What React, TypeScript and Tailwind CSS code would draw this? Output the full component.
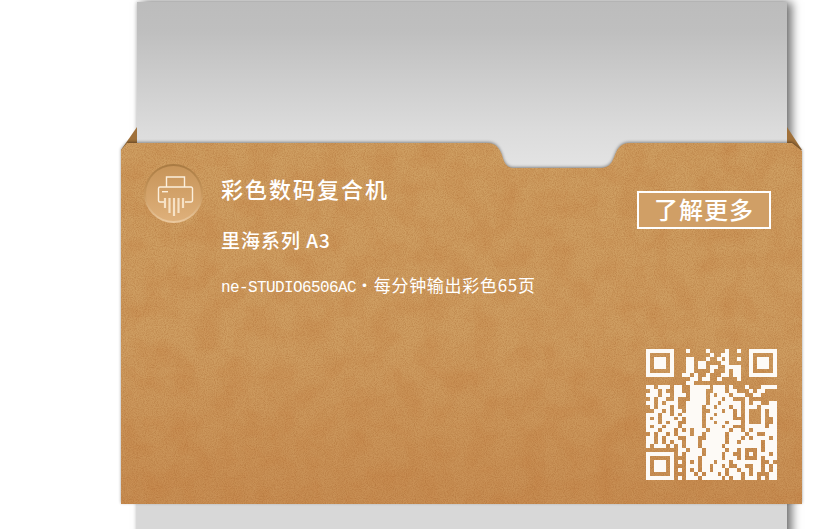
import React from 'react';

const CJK = '"Noto Sans CJK SC", "Noto Sans", sans-serif';

const QR_ROWS = [
  '#######...#....#....#..#..#######',
  '#.....#.........#..##.....#.....#',
  '#.###.#...##...#..#.#..#..#.###.#',
  '#.###.#...##.##....##.....#.###.#',
  '#.###.#...##.##.##..####..#.###.#',
  '#.....#...##....#...#.##..#.....#',
  '#######..##.#..#...##.##..#######',
  '...........##.##..#....#.........',
  '..........##.....................',
  '##.###.##..#####.###.#...#...####',
  '.##.#..##..####..###.##...#.##...',
  '###.##.###.####.#.###.###..##....',
  '.#.##..#...####.###.##...#.......',
  '##.#.###..#####.##.#####.#.##..##',
  '.#.###.#..####.##.###.##.###.####',
  '..##.#.##.####..###.##.#.#...#.##',
  '###.##.#.#####.##.####.#.#...#.##',
  '#.#.###.#.####.#.#####...#...#..#',
  '###.#.##..####.##.##.###.#...#..#',
  '#.##.###.#####.####.##...#####.##',
  '###.###.#.#.###.#####.##.#.######',
  '.#.##.#.###.##.#####.####.##..###',
  '##.#.###..###..#####.###.#.####.#',
  '##.#.#.##.###.######.##.#####.###',
  '#.###.#.#.###.#####.#########.###.',
  '........##.###.#####.##.#...#.###',
  '#######.#.####.####.##..#.#.###.#',
  '#.....#...###.#####.###.#...#.###',
  '#.###.#.#.#.#.###.###.#######..#.',
  '#.###.#...###.##.##.#..##..##.#.#',
  '#.###.#.#.#.#.##.###.##.##.##.#.#',
  '#.....#...##.#.###.#.###.#.#...##',
  '#######.#.###.#####.#.##.###.#.##',
];

function QrCode() {
  return (
    <svg width="131" height="131" viewBox="0 0 33 33" shapeRendering="crispEdges" className="block">
      {QR_ROWS.map((row, y) =>
        row.split('').map((c, x) =>
          c === '#' ? <rect key={`${x}-${y}`} x={x} y={y} width="1.02" height="1.02" fill="#fdfaf6" /> : null,
        ),
      )}
    </svg>
  );
}

function ShredderBadge() {
  return (
    <svg width="60" height="60" viewBox="0 0 60 60" className="block shrink-0">
      <defs>
        <linearGradient id="badge" x1="0" y1="0" x2="0" y2="1">
          <stop offset="0" stopColor="#c79459" />
          <stop offset="1" stopColor="#deb07a" />
        </linearGradient>
        <linearGradient id="rim" x1="0" y1="0" x2="0" y2="1">
          <stop offset="0" stopColor="#a87a42" />
          <stop offset="0.5" stopColor="#c8975c" />
          <stop offset="1" stopColor="#eccaa0" />
        </linearGradient>
      </defs>
      <circle cx="29.500" cy="29.500" r="29.500" fill="url(#rim)" />
      <circle cx="29.500" cy="29.500" r="27.500" fill="url(#badge)" />
      <g fill="none" stroke="#fcefdc" strokeWidth="1.400">
        <path d="M22.500 23v-10h18v10" />
        <path d="M22 38h-6a1.500 1.500 0 0 1-1.500-1.500v-12a1.500 1.500 0 0 1 1.500-1.500h31a1.500 1.500 0 0 1 1.500 1.500v12a1.500 1.500 0 0 1-1.500 1.500h-6" />
      </g>
      <rect x="18" y="27" width="6" height="1.400" fill="#fcefdc" />
      <g stroke="#f7e2c5" strokeWidth="2.200">
        <path d="M21 34v10" />
        <path d="M25.500 34v15" />
        <path d="M30 34v18" />
        <path d="M34.500 34v15" />
        <path d="M39 34v10" />
      </g>
    </svg>
  );
}

function FolderBody() {
  return (
    <svg
      width="681"
      height="361"
      viewBox="0 0 681 361"
      className="absolute left-0 top-0 drop-shadow-[0_-1px_1.500px_rgba(0,0,0,0.4)]"
    >
      <defs>
        <linearGradient id="kraft" x1="0" y1="0" x2="0" y2="1">
          <stop offset="0" stopColor="#cf9f62" />
          <stop offset="0.55" stopColor="#cf9e62" />
          <stop offset="1" stopColor="#c88f54" />
        </linearGradient>
        <filter id="grain" x="0" y="0" width="100%" height="100%" colorInterpolationFilters="sRGB">
          <feTurbulence type="fractalNoise" baseFrequency="0.9" numOctaves="2" seed="4" />
          <feColorMatrix values="0 0 0 0 0.62  0 0 0 0 0.36  0 0 0 0 0.14  0.7 0 0 0 -0.25" />
        </filter>
        <filter id="blotch" x="0" y="0" width="100%" height="100%" colorInterpolationFilters="sRGB">
          <feTurbulence type="fractalNoise" baseFrequency="0.04" numOctaves="4" seed="9" />
          <feColorMatrix values="0 0 0 0 0.75  0 0 0 0 0.46  0 0 0 0 0.22  0.55 0 0 0 -0.2" />
        </filter>
        <clipPath id="folderClip">
          <path d="M0 7L6 0H366C374 0 378 4 381 12C383 20 386 25 392 25H480C488 25 491 20 494 12C497 4 501 0 509 0H671L681 8V361H0Z" />
        </clipPath>
      </defs>
      <g clipPath="url(#folderClip)">
        <rect width="681" height="361" fill="url(#kraft)" />
        <rect width="681" height="361" filter="url(#blotch)" />
        <rect width="681" height="361" filter="url(#grain)" />
      </g>
    </svg>
  );
}

export default function App() {
  return (
    <div className="relative w-[823px] h-[529px] bg-white overflow-hidden" style={{ fontFamily: CJK }}>
      {/* paper sheet sticking out of the folder */}
      <div className="absolute left-[137px] top-[2px] w-[650px] h-[540px] bg-[linear-gradient(to_bottom,#bcbcbc_0px,#bfbfbf_30px,#dcdcdc_130px,#e3e3e3_165px,#d8d8d8_166px,#d8d8d8_100%)] shadow-[5px_0_9px_rgba(0,0,0,0.55),-1px_0_3px_rgba(0,0,0,0.15)]" />

      {/* folder back flaps */}
      <svg width="823" height="160" viewBox="0 0 823 160" className="absolute left-0 top-0">
        <path d="M121 150L137 127V150Z" fill="#a0713a" />
        <path d="M787 127L802 150H787Z" fill="#a0713a" />
      </svg>

      {/* folder */}
      <div className="absolute left-[121px] top-[143px] w-[681px] h-[361px]">
        <FolderBody />
        <div className="relative h-full flex justify-between pl-[23px] pr-[25px] pt-[21px] pb-[24px] text-white">
          <div className="flex gap-[17px]">
            <ShredderBadge />
            <div className="pt-[10px]">
              <div className="text-[22px] leading-[28px] tracking-[2px] font-medium">彩色数码复合机</div>
              <div className="mt-[25px] text-[19px] leading-[26px] tracking-[1px] font-medium">里海系列 A3</div>
              <div className="mt-[20px] text-[17px] leading-[24px] tracking-[0.7px] whitespace-nowrap">
                <span className="font-['Liberation_Mono'] text-[16px] tracking-[-0.6px]">ne-STUDIO6506AC</span>・每分钟输出彩色65页
              </div>
            </div>
          </div>
          <div className="flex flex-col items-end justify-between">
            <div className="mt-[27px] mr-[6px] w-[134px] h-[38px] pb-[3px] flex items-center justify-center border-2 border-white bg-[#d09f66] text-[24px] tracking-[1px] font-medium">
              了解更多
            </div>
            <QrCode />
          </div>
        </div>
      </div>
    </div>
  );
}
